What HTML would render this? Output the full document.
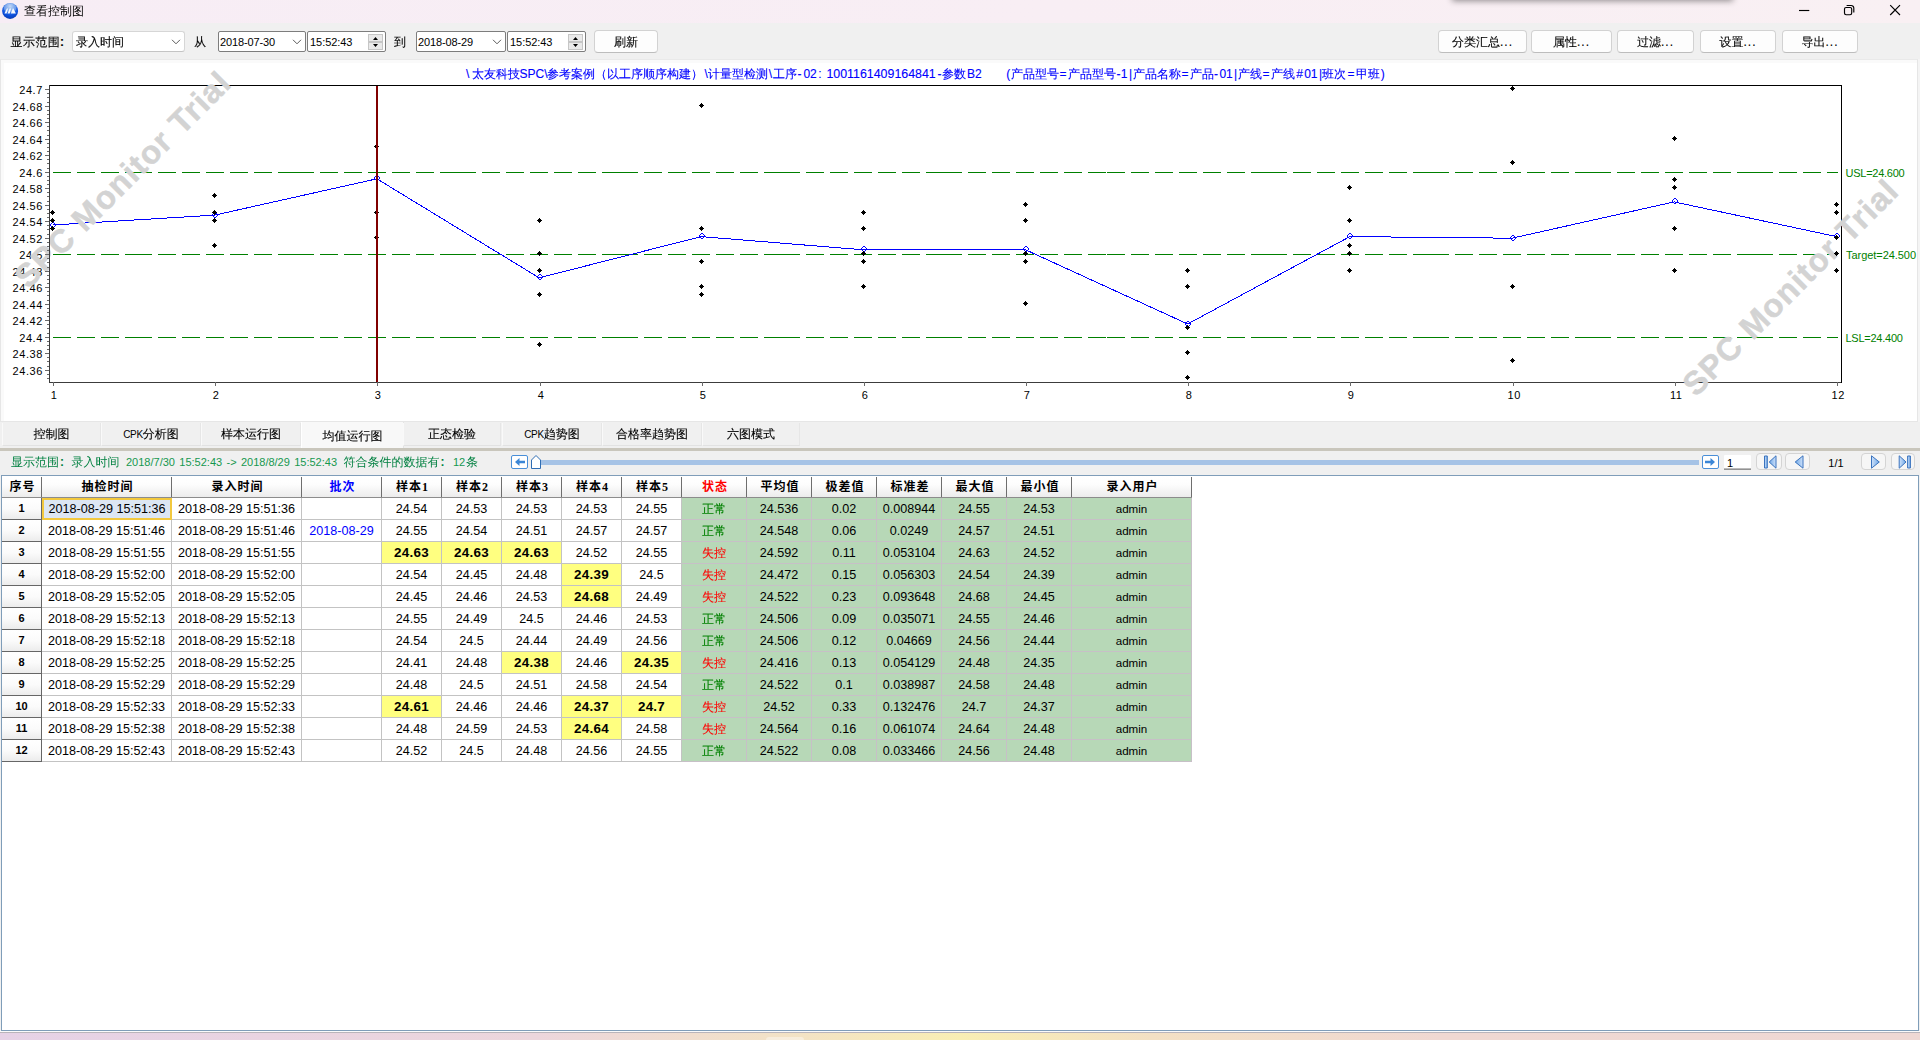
<!DOCTYPE html>
<html lang="zh-CN"><head><meta charset="utf-8"><title>查看控制图</title>
<style>
*{box-sizing:border-box;margin:0;padding:0}
html,body{width:1920px;height:1040px;overflow:hidden;background:#f0f0f0}
body{position:relative;font-family:"Liberation Sans","WenQuanYi Zen Hei",sans-serif;font-size:12px;color:#000;line-height:1}
.abs{position:absolute}
.cj{font-family:"Liberation Sans","WenQuanYi Zen Hei",sans-serif;font-size:12px}
.lat{font-family:"Liberation Sans",sans-serif}
#titlebar{position:absolute;left:0;top:0;width:1920px;height:23px;background:linear-gradient(90deg,#f7edf5 0%,#f8eef4 55%,#f9f0f3 100%)}
#title{position:absolute;left:24px;top:5px;font-size:12px;line-height:12px;white-space:nowrap}
#shadow{position:absolute;left:1453px;top:-12px;width:279px;height:12px;box-shadow:0 0 6px 1px rgba(0,0,0,.42);background:#999}
#toolbar{position:absolute;left:0;top:23px;width:1920px;height:37px;background:#f0f0f0}
.tl{position:absolute;white-space:nowrap;font-size:12px;line-height:14px}
.combo{position:absolute;background:#fff;border:1px solid #d6d6d6;border-bottom-color:#c4c4c4;border-radius:3px}
.dtp{position:absolute;background:#fff;border:1px solid #7d7d7d;border-radius:2px}
.dtp span,.combo span{position:absolute;white-space:nowrap}
.dtxt{font-size:11px;line-height:13px;letter-spacing:-0.12px;font-family:"Liberation Sans",sans-serif}
.btn{position:absolute;background:#fdfdfd;border:1px solid #d2d2d2;border-bottom-color:#bdbdbd;border-radius:4px;text-align:center;font-size:12px;line-height:21px;padding-top:1px;white-space:nowrap}
.dots{letter-spacing:1px}
.spin{position:absolute;background:#e9e9e9;border:1px solid #c6c6c6;width:15px}
#chartpanel{position:absolute;left:0;top:59px;width:1918px;height:363px;background:#fafafa;border:1px solid #e6e6e6;border-top-color:#e9e9e9}
#chartpanel .in{position:absolute;left:3px;top:3px;right:0;bottom:0;background:#fff}
#chart{position:absolute;left:0;top:60px}
#rstrip{position:absolute;left:1918px;top:59px;width:2px;height:363px;background:#f4f4f4}
#ctitle{position:absolute;left:0;top:67px;height:14px;color:#00f;-webkit-text-stroke:0.12px #00f;font-size:12px;line-height:14px;white-space:nowrap}
#ctitle span{position:absolute;top:0}
#tabs{position:absolute;left:0;top:421px;width:1920px;height:27px}
.tab{position:absolute;top:2px;height:23px;border-left:1px solid #f9f9f9;border-right:1px solid #e6e6e6;border-bottom:1px solid #e2e2e2;text-align:center;font-size:12px;line-height:22px;white-space:nowrap;background:#f0f0f0}
.tab.sel{top:1px;height:26px;background:#f8f8f8;line-height:28px;border-left:1px solid #fff;border-right:1px solid #e4e4e4;border-bottom:none}
.tab .l{font-size:10px;letter-spacing:-0.3px}
#split{position:absolute;left:0;top:448px;width:1920px;height:3px;background:#c9c6bc}
#status{position:absolute;left:11px;top:455px;font-size:12px;line-height:14px;white-space:nowrap;color:#008040}
#status span{position:absolute;top:0}
#status span.cl{position:static;font-weight:bold;margin-left:1px}
#status .l{font-size:11px;color:#16984f;word-spacing:1.3px}
#grid{position:absolute;left:1px;top:475px;width:1918px;height:556px;border:1px solid #7f9db9;background:#fff}
.hc{position:absolute;top:476px;height:22px;background:linear-gradient(#fff 0%,#fdfdfd 40%,#ececec 100%);border-bottom:1px solid #8c8c8c;text-align:center;font:bold 12px/22.5px "Liberation Serif","Noto Sans CJK SC",sans-serif;white-space:nowrap;overflow:hidden;letter-spacing:1px;text-indent:1px}
.hc i{position:absolute;right:0;top:1px;bottom:0;width:1px;background:#6e6e6e}
.rh{position:absolute;left:2px;width:40px;height:22px;background:linear-gradient(#fff 0%,#fbfbfb 50%,#ececec 100%);border-right:1px solid #666;border-bottom:1px solid #666;text-align:center;font:bold 11px/21px "Liberation Sans",sans-serif}
.c{position:absolute;height:22px;border-right:1px solid #c3c3c3;border-bottom:1px solid #c3c3c3;text-align:center;font-size:12.6px;line-height:22.5px;white-space:nowrap;overflow:hidden;font-family:"Liberation Sans","WenQuanYi Zen Hei",sans-serif}
.c.g{background:#b7d8b7;border-color:#c7c0c7}
.c.y{background:#ffff80;font-weight:bold;font-size:13.4px;letter-spacing:.25px}
.c.s{font-size:12px}
.c.sel{background:#dce6f3;border:2px solid #f2c83e;line-height:19.5px}
#bottom{position:absolute;left:0;top:1032px;width:1920px;height:8px;background:linear-gradient(90deg,#e6d2e6 0%,#ecd6dc 28%,#f3e3c4 42%,#f8eeb4 50%,#f3e0c4 60%,#efd8d2 75%,#eed8d4 100%);border-top:1px solid #b9b4ba}
#btab{position:absolute;left:766px;top:1037px;width:38px;height:4px;background:rgba(255,255,255,.4);border-radius:3px 3px 0 0}
#bottomw{position:absolute;left:0;top:1031px;width:1920px;height:1px;background:#fbfbfb}
.tab,.tl,.btn,.combo span,.c.s{-webkit-text-stroke:.12px currentColor}
.tab .l,#status .l{-webkit-text-stroke:0}
</style></head>
<body>
<div id="titlebar"><div id="shadow"></div>
<svg class="abs" style="left:1px;top:2px" width="19" height="19" viewBox="0 0 19 19">
<defs><radialGradient id="ig" cx="50%" cy="22%" r="75%"><stop offset="0" stop-color="#a9c8f3"/><stop offset=".45" stop-color="#3c7be4"/><stop offset=".75" stop-color="#0b4fdd"/><stop offset="1" stop-color="#0a3fb8"/></radialGradient></defs>
<circle cx="9.1" cy="8.9" r="8" fill="url(#ig)"/><ellipse cx="9.1" cy="6" rx="6.3" ry="4.6" fill="#fff" fill-opacity=".28"/>
<path d="M3.4 11.5L5.9 6.4H7L5.6 11.5Z M6.5 11.5L8.7 6.4H10L8.7 11.5Z M9.8 11.5L12.05 6L14.9 11.5Z" fill="#fff" fill-opacity=".95"/>
</svg>
<div id="title">查看控制图</div>
<svg class="abs" style="left:1790px;top:0" width="120" height="23" viewBox="0 0 120 23" fill="none" stroke="#000" stroke-width="1.15">
<path d="M9 10.5H19.3"/>
<rect x="54.5" y="7.5" width="7.2" height="7.2" rx="1.6"/>
<path d="M56.6 5.5H61.2A2.6 2.6 0 0 1 63.8 8.1V12.6"/>
<path d="M100.2 5.2L110 15M110 5.2L100.2 15"/>
</svg>
</div>
<div id="toolbar">
<div class="tl" style="left:10.5px;top:12px;letter-spacing:.4px">显示范围<b>:</b></div>
<div class="combo" style="left:72px;top:8px;width:113px;height:21px"><span style="left:3px;top:3px;font-size:12px;line-height:14px">录入时间</span><svg class="abs" style="left:98px;top:7px" width="10" height="6" viewBox="0 0 10 6" fill="none" stroke="#5a5a5a" stroke-width="1"><path d="M1 .8L5 4.8L9 .8"/></svg></div>
<div class="tl" style="left:194px;top:12px">从</div>
<div class="dtp" style="left:218px;top:8px;width:88px;height:21px"><span class="dtxt" style="left:1px;top:4px;letter-spacing:-0.12px">2018-07-30</span><svg class="abs" style="left:73px;top:7px" width="10" height="6" viewBox="0 0 10 6" fill="none" stroke="#5a5a5a" stroke-width="1"><path d="M1 .8L5 4.8L9 .8"/></svg></div>
<div class="dtp" style="left:307px;top:8px;width:79px;height:21px"><span class="dtxt" style="left:2px;top:4px;letter-spacing:-0.05px">15:52:43</span><div class="spin" style="left:60px;top:2px;height:8px"></div><div class="spin" style="left:60px;top:10px;height:8px"></div><svg class="abs" style="left:65px;top:4px" width="5" height="12" viewBox="0 0 5 12"><path d="M0 4L2.5 1L5 4Z M0 8L2.5 11L5 8Z" fill="#000"/></svg></div>
<div class="tl" style="left:394px;top:12px">到</div>
<div class="dtp" style="left:416px;top:8px;width:90px;height:21px"><span class="dtxt" style="left:1px;top:4px;letter-spacing:-0.12px">2018-08-29</span><svg class="abs" style="left:75px;top:7px" width="10" height="6" viewBox="0 0 10 6" fill="none" stroke="#5a5a5a" stroke-width="1"><path d="M1 .8L5 4.8L9 .8"/></svg></div>
<div class="dtp" style="left:507px;top:8px;width:79px;height:21px"><span class="dtxt" style="left:2px;top:4px;letter-spacing:-0.05px">15:52:43</span><div class="spin" style="left:60px;top:2px;height:8px"></div><div class="spin" style="left:60px;top:10px;height:8px"></div><svg class="abs" style="left:65px;top:4px" width="5" height="12" viewBox="0 0 5 12"><path d="M0 4L2.5 1L5 4Z M0 8L2.5 11L5 8Z" fill="#000"/></svg></div>
<div class="btn" style="left:594px;top:7px;width:64px;height:23px">刷新</div>
<div class="btn" style="left:1438px;top:7px;width:89px;height:23px">分类汇总<span class="dots">...</span></div>
<div class="btn" style="left:1531px;top:7px;width:81px;height:23px">属性<span class="dots">...</span></div>
<div class="btn" style="left:1617px;top:7px;width:77px;height:23px">过滤<span class="dots">...</span></div>
<div class="btn" style="left:1700px;top:7px;width:76px;height:23px">设置<span class="dots">...</span></div>
<div class="btn" style="left:1782px;top:7px;width:76px;height:23px">导出<span class="dots">...</span></div>
</div>
<div id="chartpanel"><div class="in"></div></div><div id="rstrip"></div>
<svg id="chart" width="1920" height="361" viewBox="0 60 1920 361" font-family="Liberation Sans, sans-serif" font-size="11">
<g fill="#000" font-size="11" letter-spacing="0.6"><text x="43" y="375.0" text-anchor="end">24.36</text><text x="43" y="358.0" text-anchor="end">24.38</text><text x="43" y="342.0" text-anchor="end">24.4</text><text x="43" y="325.0" text-anchor="end">24.42</text><text x="43" y="309.0" text-anchor="end">24.44</text><text x="43" y="292.0" text-anchor="end">24.46</text><text x="43" y="276.0" text-anchor="end">24.48</text><text x="43" y="259.0" text-anchor="end">24.5</text><text x="43" y="243.0" text-anchor="end">24.52</text><text x="43" y="226.0" text-anchor="end">24.54</text><text x="43" y="210.0" text-anchor="end">24.56</text><text x="43" y="193.0" text-anchor="end">24.58</text><text x="43" y="177.0" text-anchor="end">24.6</text><text x="43" y="160.0" text-anchor="end">24.62</text><text x="43" y="144.0" text-anchor="end">24.64</text><text x="43" y="127.0" text-anchor="end">24.66</text><text x="43" y="111.0" text-anchor="end">24.68</text><text x="43" y="94.0" text-anchor="end">24.7</text><text x="54.2" y="399" text-anchor="middle">1</text><text x="216.2" y="399" text-anchor="middle">2</text><text x="378.2" y="399" text-anchor="middle">3</text><text x="541.2" y="399" text-anchor="middle">4</text><text x="703.2" y="399" text-anchor="middle">5</text><text x="865.2" y="399" text-anchor="middle">6</text><text x="1027.2" y="399" text-anchor="middle">7</text><text x="1189.2" y="399" text-anchor="middle">8</text><text x="1351.2" y="399" text-anchor="middle">9</text><text x="1514.2" y="399" text-anchor="middle">10</text><text x="1676.2" y="399" text-anchor="middle">11</text><text x="1838.2" y="399" text-anchor="middle">12</text></g>
<g shape-rendering="crispEdges" fill="none" stroke-width="1"><path d="M49 382.5H1842" stroke="#3c3c3c"/><path d="M49 85.5H1842" stroke="#000"/><path d="M1841.5 85V383" stroke="#000"/></g>
<g shape-rendering="crispEdges" stroke="#008000" stroke-width="1" stroke-dasharray="18 6">
<path d="M53 172.5H134"/>
<path d="M134 172.5H296"/>
<path d="M296 172.5H458"/>
<path d="M458 172.5H620"/>
<path d="M620 172.5H782"/>
<path d="M782 172.5H944"/>
<path d="M944 172.5H1107"/>
<path d="M1107 172.5H1269"/>
<path d="M1269 172.5H1431"/>
<path d="M1431 172.5H1593"/>
<path d="M1593 172.5H1755"/>
<path d="M1755 172.5H1838"/>
<path d="M53 254.5H134"/>
<path d="M134 254.5H296"/>
<path d="M296 254.5H458"/>
<path d="M458 254.5H620"/>
<path d="M620 254.5H782"/>
<path d="M782 254.5H944"/>
<path d="M944 254.5H1107"/>
<path d="M1107 254.5H1269"/>
<path d="M1269 254.5H1431"/>
<path d="M1431 254.5H1593"/>
<path d="M1593 254.5H1755"/>
<path d="M1755 254.5H1838"/>
<path d="M53 337.5H134"/>
<path d="M134 337.5H296"/>
<path d="M296 337.5H458"/>
<path d="M458 337.5H620"/>
<path d="M620 337.5H782"/>
<path d="M782 337.5H944"/>
<path d="M944 337.5H1107"/>
<path d="M1107 337.5H1269"/>
<path d="M1269 337.5H1431"/>
<path d="M1431 337.5H1593"/>
<path d="M1593 337.5H1755"/>
<path d="M1755 337.5H1838"/>
</g>
<polyline shape-rendering="crispEdges" fill="none" stroke="#00f" stroke-width="1" points="52.6,225.0 214.8,215.1 376.9,178.8 539.1,277.8 701.2,236.6 863.4,249.8 1025.6,249.8 1187.7,324.0 1349.9,236.6 1512.0,238.2 1674.2,201.9 1836.4,236.6"/>
<g shape-rendering="crispEdges"><path d="M52 222h1v1h-1zM53 222h1v1h-1zM51 223h1v1h-1zM54 223h1v1h-1zM50 224h1v1h-1zM55 224h1v1h-1zM50 225h1v1h-1zM55 225h1v1h-1zM51 226h1v1h-1zM54 226h1v1h-1zM52 227h1v1h-1zM53 227h1v1h-1z" fill="#00f"/><path d="M214 212h1v1h-1zM215 212h1v1h-1zM213 213h1v1h-1zM216 213h1v1h-1zM212 214h1v1h-1zM217 214h1v1h-1zM212 215h1v1h-1zM217 215h1v1h-1zM213 216h1v1h-1zM216 216h1v1h-1zM214 217h1v1h-1zM215 217h1v1h-1z" fill="#00f"/><path d="M376 175h1v1h-1zM377 175h1v1h-1zM375 176h1v1h-1zM378 176h1v1h-1zM374 177h1v1h-1zM379 177h1v1h-1zM374 178h1v1h-1zM379 178h1v1h-1zM375 179h1v1h-1zM378 179h1v1h-1zM376 180h1v1h-1zM377 180h1v1h-1z" fill="#00f"/><path d="M539 274h1v1h-1zM540 274h1v1h-1zM538 275h1v1h-1zM541 275h1v1h-1zM537 276h1v1h-1zM542 276h1v1h-1zM537 277h1v1h-1zM542 277h1v1h-1zM538 278h1v1h-1zM541 278h1v1h-1zM539 279h1v1h-1zM540 279h1v1h-1z" fill="#00f"/><path d="M701 233h1v1h-1zM702 233h1v1h-1zM700 234h1v1h-1zM703 234h1v1h-1zM699 235h1v1h-1zM704 235h1v1h-1zM699 236h1v1h-1zM704 236h1v1h-1zM700 237h1v1h-1zM703 237h1v1h-1zM701 238h1v1h-1zM702 238h1v1h-1z" fill="#00f"/><path d="M863 246h1v1h-1zM864 246h1v1h-1zM862 247h1v1h-1zM865 247h1v1h-1zM861 248h1v1h-1zM866 248h1v1h-1zM861 249h1v1h-1zM866 249h1v1h-1zM862 250h1v1h-1zM865 250h1v1h-1zM863 251h1v1h-1zM864 251h1v1h-1z" fill="#00f"/><path d="M1025 246h1v1h-1zM1026 246h1v1h-1zM1024 247h1v1h-1zM1027 247h1v1h-1zM1023 248h1v1h-1zM1028 248h1v1h-1zM1023 249h1v1h-1zM1028 249h1v1h-1zM1024 250h1v1h-1zM1027 250h1v1h-1zM1025 251h1v1h-1zM1026 251h1v1h-1z" fill="#00f"/><path d="M1187 321h1v1h-1zM1188 321h1v1h-1zM1186 322h1v1h-1zM1189 322h1v1h-1zM1185 323h1v1h-1zM1190 323h1v1h-1zM1185 324h1v1h-1zM1190 324h1v1h-1zM1186 325h1v1h-1zM1189 325h1v1h-1zM1187 326h1v1h-1zM1188 326h1v1h-1z" fill="#00f"/><path d="M1349 233h1v1h-1zM1350 233h1v1h-1zM1348 234h1v1h-1zM1351 234h1v1h-1zM1347 235h1v1h-1zM1352 235h1v1h-1zM1347 236h1v1h-1zM1352 236h1v1h-1zM1348 237h1v1h-1zM1351 237h1v1h-1zM1349 238h1v1h-1zM1350 238h1v1h-1z" fill="#00f"/><path d="M1512 235h1v1h-1zM1513 235h1v1h-1zM1511 236h1v1h-1zM1514 236h1v1h-1zM1510 237h1v1h-1zM1515 237h1v1h-1zM1510 238h1v1h-1zM1515 238h1v1h-1zM1511 239h1v1h-1zM1514 239h1v1h-1zM1512 240h1v1h-1zM1513 240h1v1h-1z" fill="#00f"/><path d="M1674 198h1v1h-1zM1675 198h1v1h-1zM1673 199h1v1h-1zM1676 199h1v1h-1zM1672 200h1v1h-1zM1677 200h1v1h-1zM1672 201h1v1h-1zM1677 201h1v1h-1zM1673 202h1v1h-1zM1676 202h1v1h-1zM1674 203h1v1h-1zM1675 203h1v1h-1z" fill="#00f"/><path d="M1836 233h1v1h-1zM1837 233h1v1h-1zM1835 234h1v1h-1zM1838 234h1v1h-1zM1834 235h1v1h-1zM1839 235h1v1h-1zM1834 236h1v1h-1zM1839 236h1v1h-1zM1835 237h1v1h-1zM1838 237h1v1h-1zM1836 238h1v1h-1zM1837 238h1v1h-1z" fill="#00f"/></g>
<g id="wm" font-weight="bold" font-size="32.5" letter-spacing="1.1" fill="#d3d3d3" stroke="#d3d3d3" stroke-width="0.5"><text transform="translate(28.3,289.7) rotate(-45)">SPC Monitor Trial</text><text transform="translate(1695.9,397.7) rotate(-45)">SPC Monitor Trial</text></g>
<g shape-rendering="crispEdges" fill="none" stroke-width="1"><path d="M49.5 85V383" stroke="#3c3c3c"/></g>
<g shape-rendering="crispEdges" stroke="#6a6a6a" stroke-width="1">
<path d="M45 370.5H49"/>
<path d="M45 353.5H49"/>
<path d="M45 337.5H49"/>
<path d="M45 320.5H49"/>
<path d="M45 304.5H49"/>
<path d="M45 287.5H49"/>
<path d="M45 271.5H49"/>
<path d="M45 254.5H49"/>
<path d="M45 238.5H49"/>
<path d="M45 221.5H49"/>
<path d="M45 205.5H49"/>
<path d="M45 188.5H49"/>
<path d="M45 172.5H49"/>
<path d="M45 155.5H49"/>
<path d="M45 139.5H49"/>
<path d="M45 122.5H49"/>
<path d="M45 106.5H49"/>
<path d="M45 89.5H49"/>
<path d="M47 378.5H49"/>
<path d="M47 374.5H49"/>
<path d="M47 366.5H49"/>
<path d="M47 361.5H49"/>
<path d="M47 357.5H49"/>
<path d="M47 349.5H49"/>
<path d="M47 345.5H49"/>
<path d="M47 341.5H49"/>
<path d="M47 333.5H49"/>
<path d="M47 328.5H49"/>
<path d="M47 324.5H49"/>
<path d="M47 316.5H49"/>
<path d="M47 312.5H49"/>
<path d="M47 308.5H49"/>
<path d="M47 300.5H49"/>
<path d="M47 295.5H49"/>
<path d="M47 291.5H49"/>
<path d="M47 283.5H49"/>
<path d="M47 279.5H49"/>
<path d="M47 275.5H49"/>
<path d="M47 267.5H49"/>
<path d="M47 262.5H49"/>
<path d="M47 258.5H49"/>
<path d="M47 250.5H49"/>
<path d="M47 246.5H49"/>
<path d="M47 242.5H49"/>
<path d="M47 234.5H49"/>
<path d="M47 229.5H49"/>
<path d="M47 225.5H49"/>
<path d="M47 217.5H49"/>
<path d="M47 213.5H49"/>
<path d="M47 209.5H49"/>
<path d="M47 201.5H49"/>
<path d="M47 196.5H49"/>
<path d="M47 192.5H49"/>
<path d="M47 184.5H49"/>
<path d="M47 180.5H49"/>
<path d="M47 176.5H49"/>
<path d="M47 168.5H49"/>
<path d="M47 163.5H49"/>
<path d="M47 159.5H49"/>
<path d="M47 151.5H49"/>
<path d="M47 147.5H49"/>
<path d="M47 143.5H49"/>
<path d="M47 135.5H49"/>
<path d="M47 130.5H49"/>
<path d="M47 126.5H49"/>
<path d="M47 118.5H49"/>
<path d="M47 114.5H49"/>
<path d="M47 110.5H49"/>
<path d="M47 102.5H49"/>
<path d="M47 97.5H49"/>
<path d="M47 93.5H49"/>
<path d="M53.5 382V386"/>
<path d="M215.5 382V386"/>
<path d="M377.5 382V386"/>
<path d="M540.5 382V386"/>
<path d="M702.5 382V386"/>
<path d="M864.5 382V386"/>
<path d="M1026.5 382V386"/>
<path d="M1188.5 382V386"/>
<path d="M1350.5 382V386"/>
<path d="M1513.5 382V386"/>
<path d="M1675.5 382V386"/>
<path d="M1837.5 382V386"/>
</g>
<g fill="#008000" letter-spacing="-0.25"><text x="1845.5" y="177">USL=24.600</text><text x="1846" y="259" letter-spacing="-0.05">Target=24.500</text><text x="1845.5" y="342">LSL=24.400</text></g>
<g shape-rendering="crispEdges"><path d="M52 218h1v1h1v1h1v1h-1v1h-1v1h-1v-1h-1v-1h-1v-1h1v-1h1z" fill="#000"/><path d="M52 226h1v1h1v1h1v1h-1v1h-1v1h-1v-1h-1v-1h-1v-1h1v-1h1z" fill="#000"/><path d="M52 226h1v1h1v1h1v1h-1v1h-1v1h-1v-1h-1v-1h-1v-1h1v-1h1z" fill="#000"/><path d="M52 226h1v1h1v1h1v1h-1v1h-1v1h-1v-1h-1v-1h-1v-1h1v-1h1z" fill="#000"/><path d="M52 210h1v1h1v1h1v1h-1v1h-1v1h-1v-1h-1v-1h-1v-1h1v-1h1z" fill="#000"/><path d="M214 210h1v1h1v1h1v1h-1v1h-1v1h-1v-1h-1v-1h-1v-1h1v-1h1z" fill="#000"/><path d="M214 218h1v1h1v1h1v1h-1v1h-1v1h-1v-1h-1v-1h-1v-1h1v-1h1z" fill="#000"/><path d="M214 243h1v1h1v1h1v1h-1v1h-1v1h-1v-1h-1v-1h-1v-1h1v-1h1z" fill="#000"/><path d="M214 193h1v1h1v1h1v1h-1v1h-1v1h-1v-1h-1v-1h-1v-1h1v-1h1z" fill="#000"/><path d="M214 193h1v1h1v1h1v1h-1v1h-1v1h-1v-1h-1v-1h-1v-1h1v-1h1z" fill="#000"/><path d="M376 144h1v1h1v1h1v1h-1v1h-1v1h-1v-1h-1v-1h-1v-1h1v-1h1z" fill="#000"/><path d="M376 144h1v1h1v1h1v1h-1v1h-1v1h-1v-1h-1v-1h-1v-1h1v-1h1z" fill="#000"/><path d="M376 144h1v1h1v1h1v1h-1v1h-1v1h-1v-1h-1v-1h-1v-1h1v-1h1z" fill="#000"/><path d="M376 235h1v1h1v1h1v1h-1v1h-1v1h-1v-1h-1v-1h-1v-1h1v-1h1z" fill="#000"/><path d="M376 210h1v1h1v1h1v1h-1v1h-1v1h-1v-1h-1v-1h-1v-1h1v-1h1z" fill="#000"/><path d="M539 218h1v1h1v1h1v1h-1v1h-1v1h-1v-1h-1v-1h-1v-1h1v-1h1z" fill="#000"/><path d="M539 292h1v1h1v1h1v1h-1v1h-1v1h-1v-1h-1v-1h-1v-1h1v-1h1z" fill="#000"/><path d="M539 268h1v1h1v1h1v1h-1v1h-1v1h-1v-1h-1v-1h-1v-1h1v-1h1z" fill="#000"/><path d="M539 342h1v1h1v1h1v1h-1v1h-1v1h-1v-1h-1v-1h-1v-1h1v-1h1z" fill="#000"/><path d="M539 251h1v1h1v1h1v1h-1v1h-1v1h-1v-1h-1v-1h-1v-1h1v-1h1z" fill="#000"/><path d="M701 292h1v1h1v1h1v1h-1v1h-1v1h-1v-1h-1v-1h-1v-1h1v-1h1z" fill="#000"/><path d="M701 284h1v1h1v1h1v1h-1v1h-1v1h-1v-1h-1v-1h-1v-1h1v-1h1z" fill="#000"/><path d="M701 226h1v1h1v1h1v1h-1v1h-1v1h-1v-1h-1v-1h-1v-1h1v-1h1z" fill="#000"/><path d="M701 103h1v1h1v1h1v1h-1v1h-1v1h-1v-1h-1v-1h-1v-1h1v-1h1z" fill="#000"/><path d="M701 259h1v1h1v1h1v1h-1v1h-1v1h-1v-1h-1v-1h-1v-1h1v-1h1z" fill="#000"/><path d="M863 210h1v1h1v1h1v1h-1v1h-1v1h-1v-1h-1v-1h-1v-1h1v-1h1z" fill="#000"/><path d="M863 259h1v1h1v1h1v1h-1v1h-1v1h-1v-1h-1v-1h-1v-1h1v-1h1z" fill="#000"/><path d="M863 251h1v1h1v1h1v1h-1v1h-1v1h-1v-1h-1v-1h-1v-1h1v-1h1z" fill="#000"/><path d="M863 284h1v1h1v1h1v1h-1v1h-1v1h-1v-1h-1v-1h-1v-1h1v-1h1z" fill="#000"/><path d="M863 226h1v1h1v1h1v1h-1v1h-1v1h-1v-1h-1v-1h-1v-1h1v-1h1z" fill="#000"/><path d="M1025 218h1v1h1v1h1v1h-1v1h-1v1h-1v-1h-1v-1h-1v-1h1v-1h1z" fill="#000"/><path d="M1025 251h1v1h1v1h1v1h-1v1h-1v1h-1v-1h-1v-1h-1v-1h1v-1h1z" fill="#000"/><path d="M1025 301h1v1h1v1h1v1h-1v1h-1v1h-1v-1h-1v-1h-1v-1h1v-1h1z" fill="#000"/><path d="M1025 259h1v1h1v1h1v1h-1v1h-1v1h-1v-1h-1v-1h-1v-1h1v-1h1z" fill="#000"/><path d="M1025 202h1v1h1v1h1v1h-1v1h-1v1h-1v-1h-1v-1h-1v-1h1v-1h1z" fill="#000"/><path d="M1187 325h1v1h1v1h1v1h-1v1h-1v1h-1v-1h-1v-1h-1v-1h1v-1h1z" fill="#000"/><path d="M1187 268h1v1h1v1h1v1h-1v1h-1v1h-1v-1h-1v-1h-1v-1h1v-1h1z" fill="#000"/><path d="M1187 350h1v1h1v1h1v1h-1v1h-1v1h-1v-1h-1v-1h-1v-1h1v-1h1z" fill="#000"/><path d="M1187 284h1v1h1v1h1v1h-1v1h-1v1h-1v-1h-1v-1h-1v-1h1v-1h1z" fill="#000"/><path d="M1187 375h1v1h1v1h1v1h-1v1h-1v1h-1v-1h-1v-1h-1v-1h1v-1h1z" fill="#000"/><path d="M1349 268h1v1h1v1h1v1h-1v1h-1v1h-1v-1h-1v-1h-1v-1h1v-1h1z" fill="#000"/><path d="M1349 251h1v1h1v1h1v1h-1v1h-1v1h-1v-1h-1v-1h-1v-1h1v-1h1z" fill="#000"/><path d="M1349 243h1v1h1v1h1v1h-1v1h-1v1h-1v-1h-1v-1h-1v-1h1v-1h1z" fill="#000"/><path d="M1349 185h1v1h1v1h1v1h-1v1h-1v1h-1v-1h-1v-1h-1v-1h1v-1h1z" fill="#000"/><path d="M1349 218h1v1h1v1h1v1h-1v1h-1v1h-1v-1h-1v-1h-1v-1h1v-1h1z" fill="#000"/><path d="M1512 160h1v1h1v1h1v1h-1v1h-1v1h-1v-1h-1v-1h-1v-1h1v-1h1z" fill="#000"/><path d="M1512 284h1v1h1v1h1v1h-1v1h-1v1h-1v-1h-1v-1h-1v-1h1v-1h1z" fill="#000"/><path d="M1512 284h1v1h1v1h1v1h-1v1h-1v1h-1v-1h-1v-1h-1v-1h1v-1h1z" fill="#000"/><path d="M1512 358h1v1h1v1h1v1h-1v1h-1v1h-1v-1h-1v-1h-1v-1h1v-1h1z" fill="#000"/><path d="M1512 86h1v1h1v1h1v1h-1v1h-1v1h-1v-1h-1v-1h-1v-1h1v-1h1z" fill="#000"/><path d="M1674 268h1v1h1v1h1v1h-1v1h-1v1h-1v-1h-1v-1h-1v-1h1v-1h1z" fill="#000"/><path d="M1674 177h1v1h1v1h1v1h-1v1h-1v1h-1v-1h-1v-1h-1v-1h1v-1h1z" fill="#000"/><path d="M1674 226h1v1h1v1h1v1h-1v1h-1v1h-1v-1h-1v-1h-1v-1h1v-1h1z" fill="#000"/><path d="M1674 136h1v1h1v1h1v1h-1v1h-1v1h-1v-1h-1v-1h-1v-1h1v-1h1z" fill="#000"/><path d="M1674 185h1v1h1v1h1v1h-1v1h-1v1h-1v-1h-1v-1h-1v-1h1v-1h1z" fill="#000"/><path d="M1836 235h1v1h1v1h1v1h-1v1h-1v1h-1v-1h-1v-1h-1v-1h1v-1h1z" fill="#000"/><path d="M1836 251h1v1h1v1h1v1h-1v1h-1v1h-1v-1h-1v-1h-1v-1h1v-1h1z" fill="#000"/><path d="M1836 268h1v1h1v1h1v1h-1v1h-1v1h-1v-1h-1v-1h-1v-1h1v-1h1z" fill="#000"/><path d="M1836 202h1v1h1v1h1v1h-1v1h-1v1h-1v-1h-1v-1h-1v-1h1v-1h1z" fill="#000"/><path d="M1836 210h1v1h1v1h1v1h-1v1h-1v1h-1v-1h-1v-1h-1v-1h1v-1h1z" fill="#000"/></g>
<rect x="376" y="86" width="2" height="296" fill="#800000" shape-rendering="crispEdges"/>
</svg>
<div id="ctitle"><span style="left:466px">\</span><span style="left:472px">太友科技</span><span style="left:519.5px">SPC\</span><span style="left:547px">参考案例（以工序顺序构建）</span><span style="left:704.4px">\</span><span style="left:708px">计量型检测</span><span style="left:768.7px">\</span><span style="left:773px">工序</span><span style="left:797.5px">-</span><span style="left:803.4px">02</span><span style="left:818.3px">:</span><span style="left:826.4px;font-size:12.4px">1001161409164841</span><span style="left:937.6px">-</span><span style="left:942px">参数</span><span style="left:967.1px">B2</span><span style="left:1006.2px">(</span><span style="left:1011px">产品型号</span><span style="left:1059.5px">=</span><span style="left:1068px">产品型号</span><span style="left:1116.5px">-</span><span style="left:1120.8px">1</span><span style="left:1128.9px">|</span><span style="left:1133px">产品名称</span><span style="left:1181.4px">=</span><span style="left:1190px">产品</span><span style="left:1214px">-</span><span style="left:1219.4px">01</span><span style="left:1233.9px">|</span><span style="left:1238px">产线</span><span style="left:1262.6px">=</span><span style="left:1271px">产线</span><span style="left:1296.2px">#</span><span style="left:1304.2px">01</span><span style="left:1319px">|</span><span style="left:1322px">班次</span><span style="left:1347.5px">=</span><span style="left:1356px">甲班</span><span style="left:1380.8px">)</span></div>
<div id="tabs">
<div class="tab" style="left:2px;width:99px">控制图</div>
<div class="tab" style="left:101px;width:100px"><span class=l>CPK</span>分析图</div>
<div class="tab" style="left:201px;width:100px">样本运行图</div>
<div class="tab sel" style="left:301px;width:103px">均值运行图</div>
<div class="tab" style="left:403px;width:98px">正态检验</div>
<div class="tab" style="left:502px;width:100px"><span class=l>CPK</span>趋势图</div>
<div class="tab" style="left:602px;width:100px">合格率趋势图</div>
<div class="tab" style="left:702px;width:98px">六图模式</div>
</div><div id="split"></div>
<div id="status"><span style="left:0">显示范围<span class=cl>:</span></span><span style="left:60.5px">录入时间</span><span class=l id="st2" style="left:115px">2018/7/30 15:52:43 -&gt; 2018/8/29 15:52:43</span><span style="left:332.5px">符合条件的数据有<span class=cl>:</span></span><span class=l style="left:442px">12</span><span style="left:455px">条</span></div>
<svg class="abs" style="left:505px;top:451px" width="1415" height="24" viewBox="505 451 1415 24">
<defs><linearGradient id="tg" x1="0" y1="0" x2="1" y2="0"><stop offset="0" stop-color="#cfe2fa"/><stop offset="1" stop-color="#6ea6e6"/></linearGradient>
<linearGradient id="tg2" x1="1" y1="0" x2="0" y2="0"><stop offset="0" stop-color="#cfe2fa"/><stop offset="1" stop-color="#6ea6e6"/></linearGradient></defs>
<rect x="541" y="460" width="1158" height="5" fill="#a6c3e6"/>
<rect x="511.5" y="455.5" width="16" height="13" rx="1.5" fill="#fff" stroke="#4a8fd8"/>
<path d="M515 462L519.5 458V460.7H525V463.3H519.5V466Z" fill="#3b86d6"/>
<path d="M531.5 468.5V460L536 455.5L540.5 460V468.5Z" fill="#fff" stroke="#2f6db3"/>
<rect x="1702.5" y="455.5" width="16" height="13" rx="1.5" fill="#fff" stroke="#4a8fd8"/>
<path d="M1715 462L1710.500 458V460.7H1705V463.3H1710.500V466Z" fill="#3b86d6"/>
<rect x="1724" y="455" width="27" height="14" rx="1" fill="#fff"/><rect x="1724" y="468.600" width="27" height="1" fill="#555"/>
<g fill="#f6f6f6" stroke="#d4d4d4"><rect x="1756.500" y="453.500" width="25" height="16" rx="3.500"/><rect x="1785.500" y="453.500" width="24" height="16" rx="3.500"/><rect x="1861.500" y="453.500" width="24" height="16" rx="3.500"/><rect x="1891.500" y="453.500" width="23" height="16" rx="3.500"/></g>
<g stroke="#3a73be" stroke-width="1" stroke-linejoin="round">
<rect x="1764.500" y="456" width="2.800" height="12" fill="url(#tg)"/><path d="M1776 455.800V468.200L1769.200 462Z" fill="url(#tg2)"/>
<path d="M1803 455.800V468.200L1795.200 462Z" fill="url(#tg2)"/>
<path d="M1871.500 455.800V468.200L1879.300 462Z" fill="url(#tg)"/>
<path d="M1899.200 455.800V468.200L1906 462Z" fill="url(#tg)"/><rect x="1907.600" y="456" width="2.800" height="12" fill="url(#tg)"/>
</g>
<text x="1727" y="467" font-family="Liberation Sans, sans-serif" font-size="11" fill="#000">1</text>
<text x="1836" y="466.500" text-anchor="middle" font-family="Liberation Sans, sans-serif" font-size="11" fill="#000">1/1</text>
</svg>
<div id="grid"></div>
<div class="hc" style="left:2px;width:40px;">序号<i></i></div>
<div class="hc" style="left:42px;width:130px;">抽检时间<i></i></div>
<div class="hc" style="left:172px;width:130px;">录入时间<i></i></div>
<div class="hc" style="left:302px;width:80px;color:#00f">批次<i></i></div>
<div class="hc" style="left:382px;width:60px;">样本1<i></i></div>
<div class="hc" style="left:442px;width:60px;">样本2<i></i></div>
<div class="hc" style="left:502px;width:60px;">样本3<i></i></div>
<div class="hc" style="left:562px;width:60px;">样本4<i></i></div>
<div class="hc" style="left:622px;width:60px;">样本5<i></i></div>
<div class="hc" style="left:682px;width:65px;color:#f00">状态<i></i></div>
<div class="hc" style="left:747px;width:65px;">平均值<i></i></div>
<div class="hc" style="left:812px;width:65px;">极差值<i></i></div>
<div class="hc" style="left:877px;width:65px;">标准差<i></i></div>
<div class="hc" style="left:942px;width:65px;">最大值<i></i></div>
<div class="hc" style="left:1007px;width:65px;">最小值<i></i></div>
<div class="hc" style="left:1072px;width:120px;">录入用户<i></i></div>
<div class="rh" style="top:498px">1</div>
<div class="c sel" style="left:42px;top:498px;width:130px;">2018-08-29 15:51:36</div>
<div class="c " style="left:172px;top:498px;width:130px;">2018-08-29 15:51:36</div>
<div class="c " style="left:302px;top:498px;width:80px;color:#00f"></div>
<div class="c " style="left:382px;top:498px;width:60px;">24.54</div>
<div class="c " style="left:442px;top:498px;width:60px;">24.53</div>
<div class="c " style="left:502px;top:498px;width:60px;">24.53</div>
<div class="c " style="left:562px;top:498px;width:60px;">24.53</div>
<div class="c " style="left:622px;top:498px;width:60px;">24.55</div>
<div class="c g s" style="left:682px;top:498px;width:65px;color:#008000">正常</div>
<div class="c g" style="left:747px;top:498px;width:65px;">24.536</div>
<div class="c g" style="left:812px;top:498px;width:65px;">0.02</div>
<div class="c g" style="left:877px;top:498px;width:65px;">0.008944</div>
<div class="c g" style="left:942px;top:498px;width:65px;">24.55</div>
<div class="c g" style="left:1007px;top:498px;width:65px;">24.53</div>
<div class="c g" style="left:1072px;top:498px;width:120px;font-size:11.6px">admin</div>
<div class="rh" style="top:520px">2</div>
<div class="c " style="left:42px;top:520px;width:130px;">2018-08-29 15:51:46</div>
<div class="c " style="left:172px;top:520px;width:130px;">2018-08-29 15:51:46</div>
<div class="c " style="left:302px;top:520px;width:80px;color:#00f">2018-08-29</div>
<div class="c " style="left:382px;top:520px;width:60px;">24.55</div>
<div class="c " style="left:442px;top:520px;width:60px;">24.54</div>
<div class="c " style="left:502px;top:520px;width:60px;">24.51</div>
<div class="c " style="left:562px;top:520px;width:60px;">24.57</div>
<div class="c " style="left:622px;top:520px;width:60px;">24.57</div>
<div class="c g s" style="left:682px;top:520px;width:65px;color:#008000">正常</div>
<div class="c g" style="left:747px;top:520px;width:65px;">24.548</div>
<div class="c g" style="left:812px;top:520px;width:65px;">0.06</div>
<div class="c g" style="left:877px;top:520px;width:65px;">0.0249</div>
<div class="c g" style="left:942px;top:520px;width:65px;">24.57</div>
<div class="c g" style="left:1007px;top:520px;width:65px;">24.51</div>
<div class="c g" style="left:1072px;top:520px;width:120px;font-size:11.6px">admin</div>
<div class="rh" style="top:542px">3</div>
<div class="c " style="left:42px;top:542px;width:130px;">2018-08-29 15:51:55</div>
<div class="c " style="left:172px;top:542px;width:130px;">2018-08-29 15:51:55</div>
<div class="c " style="left:302px;top:542px;width:80px;color:#00f"></div>
<div class="c y" style="left:382px;top:542px;width:60px;">24.63</div>
<div class="c y" style="left:442px;top:542px;width:60px;">24.63</div>
<div class="c y" style="left:502px;top:542px;width:60px;">24.63</div>
<div class="c " style="left:562px;top:542px;width:60px;">24.52</div>
<div class="c " style="left:622px;top:542px;width:60px;">24.55</div>
<div class="c g s" style="left:682px;top:542px;width:65px;color:#f00">失控</div>
<div class="c g" style="left:747px;top:542px;width:65px;">24.592</div>
<div class="c g" style="left:812px;top:542px;width:65px;">0.11</div>
<div class="c g" style="left:877px;top:542px;width:65px;">0.053104</div>
<div class="c g" style="left:942px;top:542px;width:65px;">24.63</div>
<div class="c g" style="left:1007px;top:542px;width:65px;">24.52</div>
<div class="c g" style="left:1072px;top:542px;width:120px;font-size:11.6px">admin</div>
<div class="rh" style="top:564px">4</div>
<div class="c " style="left:42px;top:564px;width:130px;">2018-08-29 15:52:00</div>
<div class="c " style="left:172px;top:564px;width:130px;">2018-08-29 15:52:00</div>
<div class="c " style="left:302px;top:564px;width:80px;color:#00f"></div>
<div class="c " style="left:382px;top:564px;width:60px;">24.54</div>
<div class="c " style="left:442px;top:564px;width:60px;">24.45</div>
<div class="c " style="left:502px;top:564px;width:60px;">24.48</div>
<div class="c y" style="left:562px;top:564px;width:60px;">24.39</div>
<div class="c " style="left:622px;top:564px;width:60px;">24.5</div>
<div class="c g s" style="left:682px;top:564px;width:65px;color:#f00">失控</div>
<div class="c g" style="left:747px;top:564px;width:65px;">24.472</div>
<div class="c g" style="left:812px;top:564px;width:65px;">0.15</div>
<div class="c g" style="left:877px;top:564px;width:65px;">0.056303</div>
<div class="c g" style="left:942px;top:564px;width:65px;">24.54</div>
<div class="c g" style="left:1007px;top:564px;width:65px;">24.39</div>
<div class="c g" style="left:1072px;top:564px;width:120px;font-size:11.6px">admin</div>
<div class="rh" style="top:586px">5</div>
<div class="c " style="left:42px;top:586px;width:130px;">2018-08-29 15:52:05</div>
<div class="c " style="left:172px;top:586px;width:130px;">2018-08-29 15:52:05</div>
<div class="c " style="left:302px;top:586px;width:80px;color:#00f"></div>
<div class="c " style="left:382px;top:586px;width:60px;">24.45</div>
<div class="c " style="left:442px;top:586px;width:60px;">24.46</div>
<div class="c " style="left:502px;top:586px;width:60px;">24.53</div>
<div class="c y" style="left:562px;top:586px;width:60px;">24.68</div>
<div class="c " style="left:622px;top:586px;width:60px;">24.49</div>
<div class="c g s" style="left:682px;top:586px;width:65px;color:#f00">失控</div>
<div class="c g" style="left:747px;top:586px;width:65px;">24.522</div>
<div class="c g" style="left:812px;top:586px;width:65px;">0.23</div>
<div class="c g" style="left:877px;top:586px;width:65px;">0.093648</div>
<div class="c g" style="left:942px;top:586px;width:65px;">24.68</div>
<div class="c g" style="left:1007px;top:586px;width:65px;">24.45</div>
<div class="c g" style="left:1072px;top:586px;width:120px;font-size:11.6px">admin</div>
<div class="rh" style="top:608px">6</div>
<div class="c " style="left:42px;top:608px;width:130px;">2018-08-29 15:52:13</div>
<div class="c " style="left:172px;top:608px;width:130px;">2018-08-29 15:52:13</div>
<div class="c " style="left:302px;top:608px;width:80px;color:#00f"></div>
<div class="c " style="left:382px;top:608px;width:60px;">24.55</div>
<div class="c " style="left:442px;top:608px;width:60px;">24.49</div>
<div class="c " style="left:502px;top:608px;width:60px;">24.5</div>
<div class="c " style="left:562px;top:608px;width:60px;">24.46</div>
<div class="c " style="left:622px;top:608px;width:60px;">24.53</div>
<div class="c g s" style="left:682px;top:608px;width:65px;color:#008000">正常</div>
<div class="c g" style="left:747px;top:608px;width:65px;">24.506</div>
<div class="c g" style="left:812px;top:608px;width:65px;">0.09</div>
<div class="c g" style="left:877px;top:608px;width:65px;">0.035071</div>
<div class="c g" style="left:942px;top:608px;width:65px;">24.55</div>
<div class="c g" style="left:1007px;top:608px;width:65px;">24.46</div>
<div class="c g" style="left:1072px;top:608px;width:120px;font-size:11.6px">admin</div>
<div class="rh" style="top:630px">7</div>
<div class="c " style="left:42px;top:630px;width:130px;">2018-08-29 15:52:18</div>
<div class="c " style="left:172px;top:630px;width:130px;">2018-08-29 15:52:18</div>
<div class="c " style="left:302px;top:630px;width:80px;color:#00f"></div>
<div class="c " style="left:382px;top:630px;width:60px;">24.54</div>
<div class="c " style="left:442px;top:630px;width:60px;">24.5</div>
<div class="c " style="left:502px;top:630px;width:60px;">24.44</div>
<div class="c " style="left:562px;top:630px;width:60px;">24.49</div>
<div class="c " style="left:622px;top:630px;width:60px;">24.56</div>
<div class="c g s" style="left:682px;top:630px;width:65px;color:#008000">正常</div>
<div class="c g" style="left:747px;top:630px;width:65px;">24.506</div>
<div class="c g" style="left:812px;top:630px;width:65px;">0.12</div>
<div class="c g" style="left:877px;top:630px;width:65px;">0.04669</div>
<div class="c g" style="left:942px;top:630px;width:65px;">24.56</div>
<div class="c g" style="left:1007px;top:630px;width:65px;">24.44</div>
<div class="c g" style="left:1072px;top:630px;width:120px;font-size:11.6px">admin</div>
<div class="rh" style="top:652px">8</div>
<div class="c " style="left:42px;top:652px;width:130px;">2018-08-29 15:52:25</div>
<div class="c " style="left:172px;top:652px;width:130px;">2018-08-29 15:52:25</div>
<div class="c " style="left:302px;top:652px;width:80px;color:#00f"></div>
<div class="c " style="left:382px;top:652px;width:60px;">24.41</div>
<div class="c " style="left:442px;top:652px;width:60px;">24.48</div>
<div class="c y" style="left:502px;top:652px;width:60px;">24.38</div>
<div class="c " style="left:562px;top:652px;width:60px;">24.46</div>
<div class="c y" style="left:622px;top:652px;width:60px;">24.35</div>
<div class="c g s" style="left:682px;top:652px;width:65px;color:#f00">失控</div>
<div class="c g" style="left:747px;top:652px;width:65px;">24.416</div>
<div class="c g" style="left:812px;top:652px;width:65px;">0.13</div>
<div class="c g" style="left:877px;top:652px;width:65px;">0.054129</div>
<div class="c g" style="left:942px;top:652px;width:65px;">24.48</div>
<div class="c g" style="left:1007px;top:652px;width:65px;">24.35</div>
<div class="c g" style="left:1072px;top:652px;width:120px;font-size:11.6px">admin</div>
<div class="rh" style="top:674px">9</div>
<div class="c " style="left:42px;top:674px;width:130px;">2018-08-29 15:52:29</div>
<div class="c " style="left:172px;top:674px;width:130px;">2018-08-29 15:52:29</div>
<div class="c " style="left:302px;top:674px;width:80px;color:#00f"></div>
<div class="c " style="left:382px;top:674px;width:60px;">24.48</div>
<div class="c " style="left:442px;top:674px;width:60px;">24.5</div>
<div class="c " style="left:502px;top:674px;width:60px;">24.51</div>
<div class="c " style="left:562px;top:674px;width:60px;">24.58</div>
<div class="c " style="left:622px;top:674px;width:60px;">24.54</div>
<div class="c g s" style="left:682px;top:674px;width:65px;color:#008000">正常</div>
<div class="c g" style="left:747px;top:674px;width:65px;">24.522</div>
<div class="c g" style="left:812px;top:674px;width:65px;">0.1</div>
<div class="c g" style="left:877px;top:674px;width:65px;">0.038987</div>
<div class="c g" style="left:942px;top:674px;width:65px;">24.58</div>
<div class="c g" style="left:1007px;top:674px;width:65px;">24.48</div>
<div class="c g" style="left:1072px;top:674px;width:120px;font-size:11.6px">admin</div>
<div class="rh" style="top:696px">10</div>
<div class="c " style="left:42px;top:696px;width:130px;">2018-08-29 15:52:33</div>
<div class="c " style="left:172px;top:696px;width:130px;">2018-08-29 15:52:33</div>
<div class="c " style="left:302px;top:696px;width:80px;color:#00f"></div>
<div class="c y" style="left:382px;top:696px;width:60px;">24.61</div>
<div class="c " style="left:442px;top:696px;width:60px;">24.46</div>
<div class="c " style="left:502px;top:696px;width:60px;">24.46</div>
<div class="c y" style="left:562px;top:696px;width:60px;">24.37</div>
<div class="c y" style="left:622px;top:696px;width:60px;">24.7</div>
<div class="c g s" style="left:682px;top:696px;width:65px;color:#f00">失控</div>
<div class="c g" style="left:747px;top:696px;width:65px;">24.52</div>
<div class="c g" style="left:812px;top:696px;width:65px;">0.33</div>
<div class="c g" style="left:877px;top:696px;width:65px;">0.132476</div>
<div class="c g" style="left:942px;top:696px;width:65px;">24.7</div>
<div class="c g" style="left:1007px;top:696px;width:65px;">24.37</div>
<div class="c g" style="left:1072px;top:696px;width:120px;font-size:11.6px">admin</div>
<div class="rh" style="top:718px">11</div>
<div class="c " style="left:42px;top:718px;width:130px;">2018-08-29 15:52:38</div>
<div class="c " style="left:172px;top:718px;width:130px;">2018-08-29 15:52:38</div>
<div class="c " style="left:302px;top:718px;width:80px;color:#00f"></div>
<div class="c " style="left:382px;top:718px;width:60px;">24.48</div>
<div class="c " style="left:442px;top:718px;width:60px;">24.59</div>
<div class="c " style="left:502px;top:718px;width:60px;">24.53</div>
<div class="c y" style="left:562px;top:718px;width:60px;">24.64</div>
<div class="c " style="left:622px;top:718px;width:60px;">24.58</div>
<div class="c g s" style="left:682px;top:718px;width:65px;color:#f00">失控</div>
<div class="c g" style="left:747px;top:718px;width:65px;">24.564</div>
<div class="c g" style="left:812px;top:718px;width:65px;">0.16</div>
<div class="c g" style="left:877px;top:718px;width:65px;">0.061074</div>
<div class="c g" style="left:942px;top:718px;width:65px;">24.64</div>
<div class="c g" style="left:1007px;top:718px;width:65px;">24.48</div>
<div class="c g" style="left:1072px;top:718px;width:120px;font-size:11.6px">admin</div>
<div class="rh" style="top:740px">12</div>
<div class="c " style="left:42px;top:740px;width:130px;">2018-08-29 15:52:43</div>
<div class="c " style="left:172px;top:740px;width:130px;">2018-08-29 15:52:43</div>
<div class="c " style="left:302px;top:740px;width:80px;color:#00f"></div>
<div class="c " style="left:382px;top:740px;width:60px;">24.52</div>
<div class="c " style="left:442px;top:740px;width:60px;">24.5</div>
<div class="c " style="left:502px;top:740px;width:60px;">24.48</div>
<div class="c " style="left:562px;top:740px;width:60px;">24.56</div>
<div class="c " style="left:622px;top:740px;width:60px;">24.55</div>
<div class="c g s" style="left:682px;top:740px;width:65px;color:#008000">正常</div>
<div class="c g" style="left:747px;top:740px;width:65px;">24.522</div>
<div class="c g" style="left:812px;top:740px;width:65px;">0.08</div>
<div class="c g" style="left:877px;top:740px;width:65px;">0.033466</div>
<div class="c g" style="left:942px;top:740px;width:65px;">24.56</div>
<div class="c g" style="left:1007px;top:740px;width:65px;">24.48</div>
<div class="c g" style="left:1072px;top:740px;width:120px;font-size:11.6px">admin</div>
<div id="bottomw"></div><div id="bottom"></div><div id="btab"></div>
</body></html>
